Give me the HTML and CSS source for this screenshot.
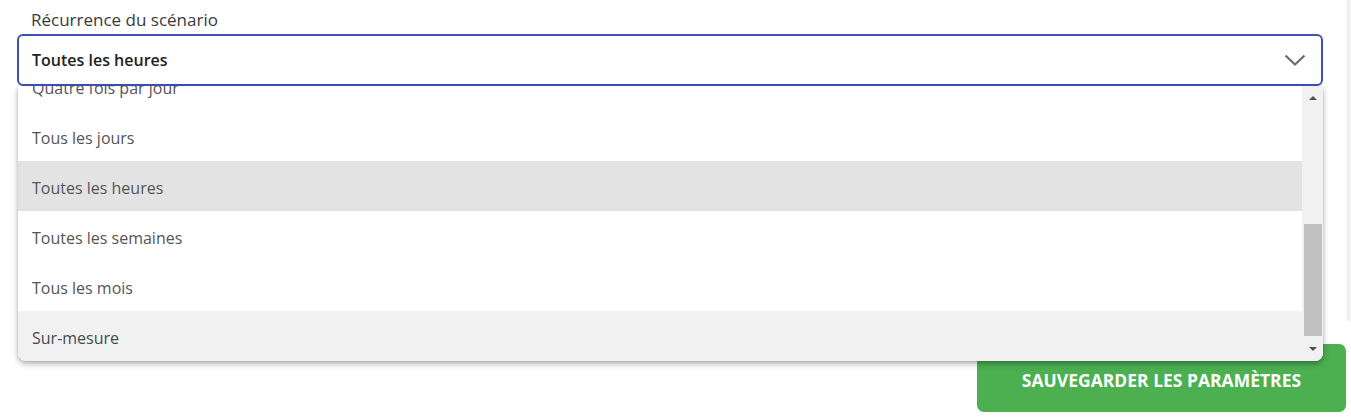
FILE: index.html
```html
<!DOCTYPE html>
<html lang="fr">
<head>
<meta charset="utf-8">
<title>Récurrence du scénario</title>
<link rel="stylesheet" href="styles.css">
</head>
<body>
<div class="page">
  <div class="content">
    <div class="field">
      <label class="label">Récurrence du scénario</label>
      <div class="select">
        <span class="value">Toutes les heures</span>
        <svg class="chevron" width="22" height="13" viewBox="0 0 22 13"><polyline points="1.5,1.5 11,10.5 20.5,1.5" fill="none" stroke="#6b6b6b" stroke-width="2.2"/></svg>
      </div>
      <div class="menu">
        <ul class="options">
          <li class="option">Quatre fois par jour</li>
          <li class="option">Tous les jours</li>
          <li class="option hover">Toutes les heures</li>
          <li class="option">Toutes les semaines</li>
          <li class="option">Tous les mois</li>
          <li class="option last">Sur-mesure</li>
        </ul>
        <div class="scrollbar">
          <span class="arrow up"></span>
          <span class="track"><span class="thumb"></span></span>
          <span class="arrow down"></span>
        </div>
      </div>
    </div>
    <div class="actions">
      <button class="save">SAUVEGARDER LES PARAMÈTRES</button>
    </div>
  </div>
  <div class="rail"></div>
</div>
</body>
</html>
```

FILE: styles.css
```css
* { box-sizing: border-box; }
html, body { margin: 0; padding: 0; background: #fff; }
body { font-family: "Open Sans", "Liberation Sans", sans-serif; }

.page { display: flex; align-items: flex-start; }
.content { width: 1347px; }
.rail { width: 4px; height: 321px; background: #f3f3f3; border-left: 1px solid #e9e9e9; }

.field { position: relative; padding: 7px 24px 0 17px; }
.label { display: block; margin-left: 14px; height: 27px; line-height: 26px; font-size: 17px; color: #3a3a3a; }

.select {
  height: 52px;
  border: 2px solid #3f51b5;
  border-radius: 6px;
  display: flex;
  align-items: center;
  justify-content: space-between;
  padding: 0 15px 0 13px;
}
.value { font-size: 16px; font-weight: 600; color: #222; }
.chevron { display: block; margin-top: 1px; }

.menu {
  position: absolute;
  left: 18px;
  right: 24px;
  top: 86px;
  height: 275px;
  background: #fff;
  border-radius: 0 0 8px 8px;
  box-shadow: 0 3px 6px rgba(0,0,0,0.28), 0 1px 3px rgba(0,0,0,0.12);
  overflow: hidden;
  display: flex;
  z-index: 2;
}
.options { list-style: none; margin: -25px 0 0; padding: 0; flex: 1; }
.option {
  height: 50px;
  line-height: 50px;
  padding: 2px 0 0 14px;
  font-size: 16px;
  color: #555;
}
.option.hover { background: #e3e3e3; }
.option.last { background: #f1f1f1; color: #434a52; }

.scrollbar {
  width: 21px;
  background: #f1f1f1;
  display: flex;
  flex-direction: column;
  align-items: center;
  padding: 0 1px 0 2px;
}
.arrow { width: 0; height: 0; border-left: 4px solid transparent; border-right: 4px solid transparent; flex: none; }
.arrow.up { border-bottom: 4px solid #505050; margin: 10px 0 0; }
.arrow.down { border-top: 4px solid #505050; margin: 0 0 10px; }
.track { flex: 1; width: 100%; display: flex; flex-direction: column; justify-content: flex-end; padding-bottom: 11px; }
.thumb { display: block; height: 112px; width: 100%; background: #c1c1c1; }

.actions { display: flex; justify-content: flex-end; margin-top: 258px; padding-right: 1px; }
.save {
  width: 369px;
  height: 68px;
  border: 0;
  border-radius: 7px;
  background: #4caf50;
  color: #fff;
  font-family: "Open Sans", "Liberation Sans", sans-serif;
  font-size: 17.5px;
  font-weight: 700;
  padding: 3px 0 0;
}
```
